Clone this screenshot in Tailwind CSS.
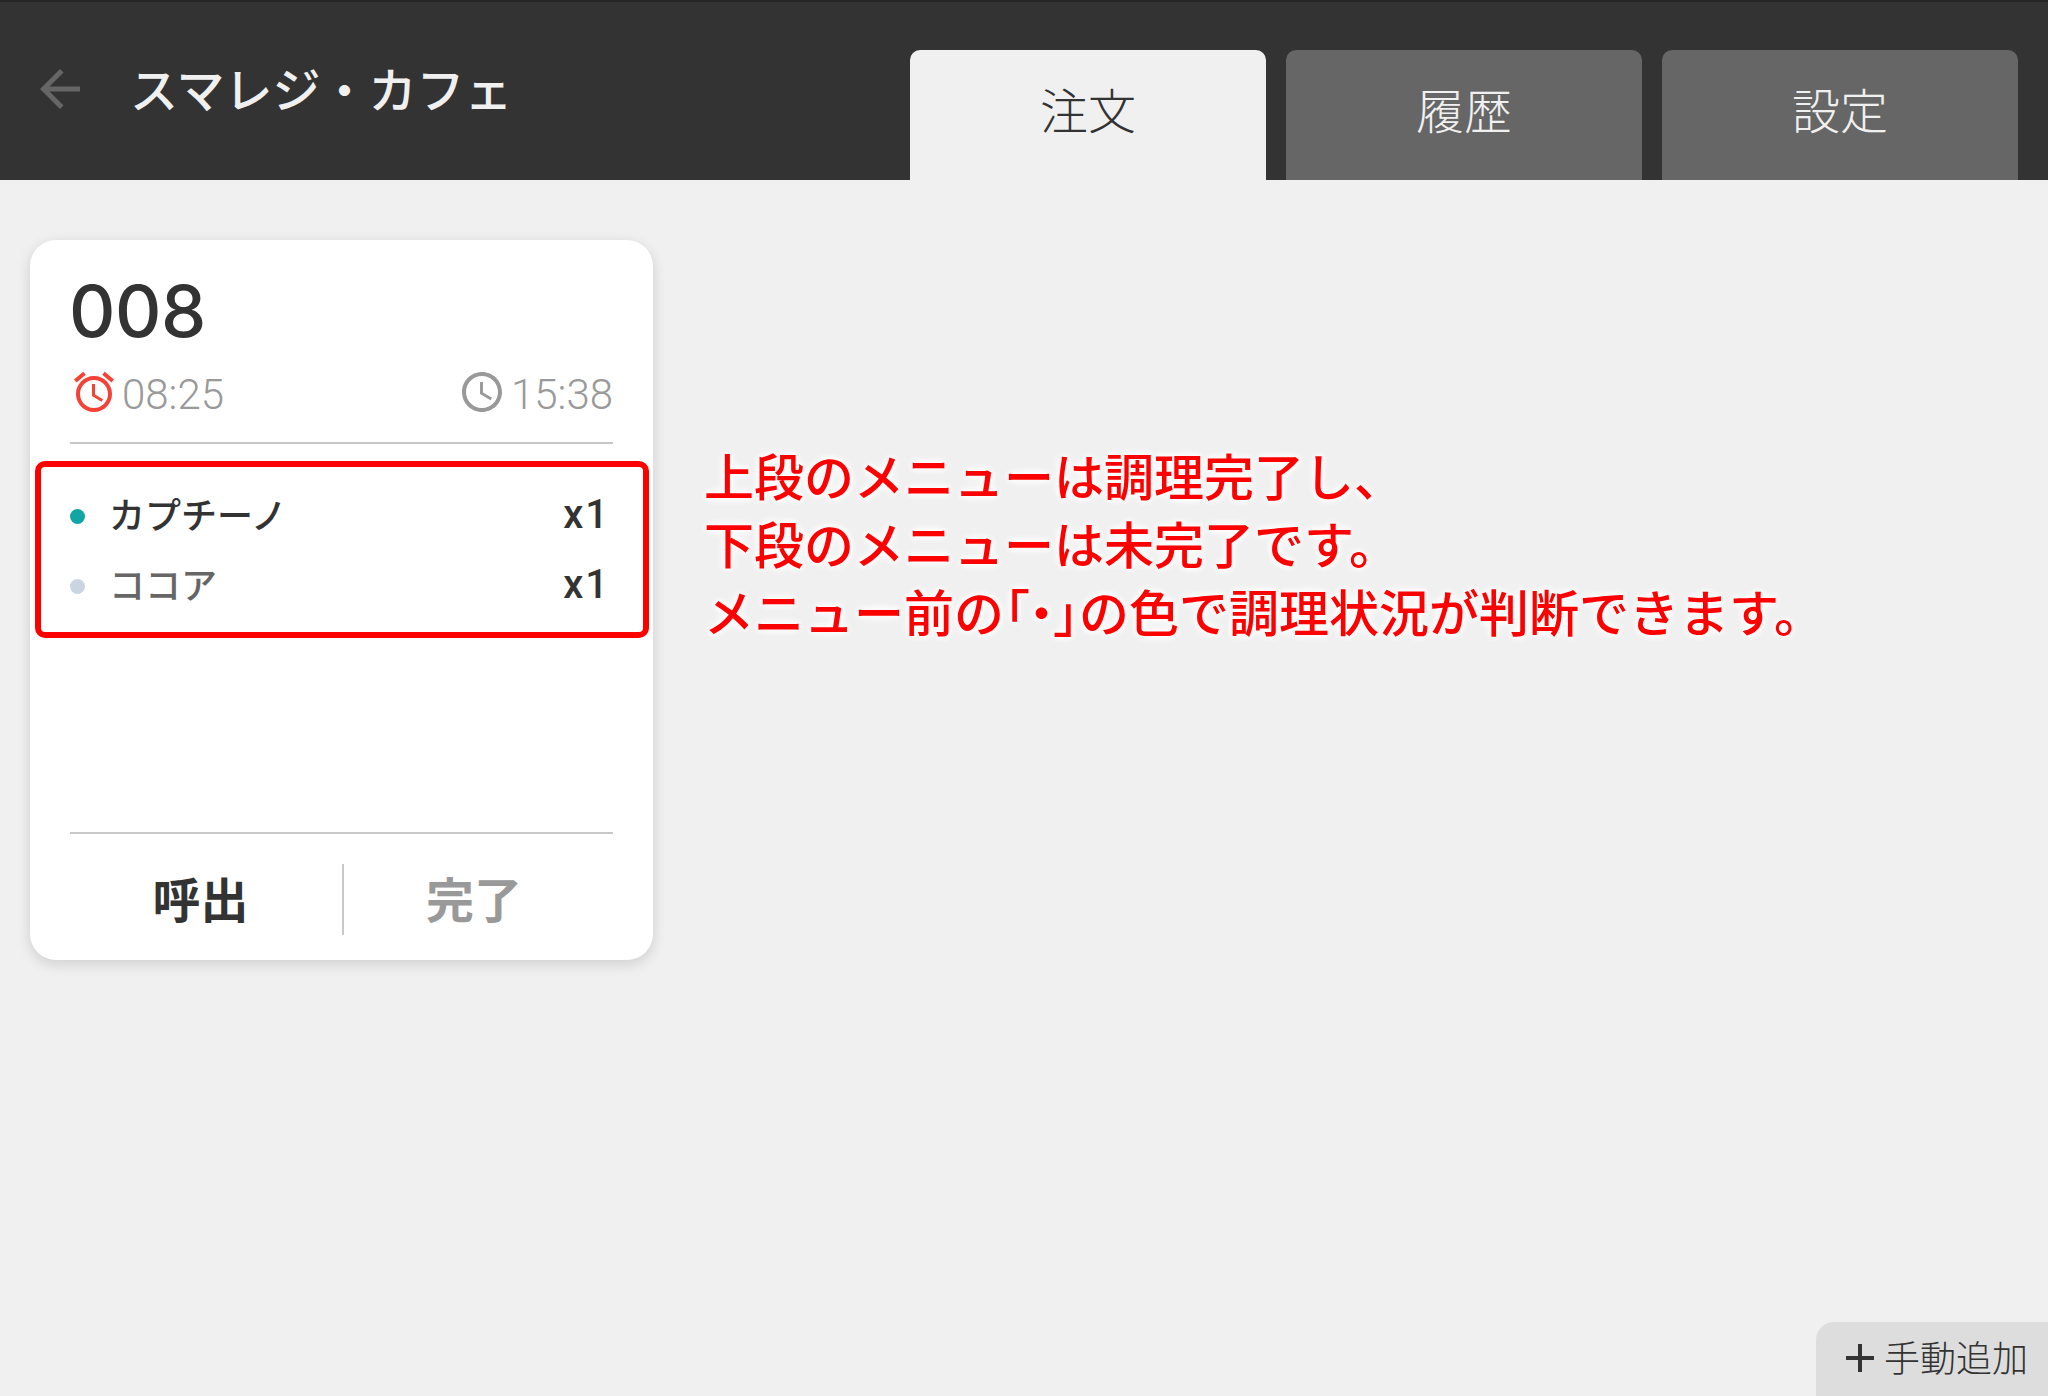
<!DOCTYPE html>
<html lang="ja">
<head>
<meta charset="utf-8">
<title>スマレジ・カフェ</title>
<script src="https://cdn.jsdelivr.net/npm/@tailwindcss/browser@4"></script>
</head>
<body class="bg-[#f0f0f0] font-['Noto_Sans_CJK_JP','Noto_Sans',sans-serif]">
<div class="flex h-[1396px] w-[2048px] flex-col overflow-hidden relative">
  <header class="flex h-[180px] items-stretch justify-between bg-[#333333] border-t-2 border-[#262626] pr-[30px]">
    <div class="flex items-center pl-[30px] pb-[2px]">
      <svg class="h-[60px] w-[60px] fill-[#666666] -mt-[2px]" viewBox="0 0 24 24"><path d="M20 11H7.83l5.59-5.59L12 4l-8 8 8 8 1.41-1.41L7.83 13H20v-2z"/></svg>
      <h1 class="ml-[40px] mb-[7px] text-[48px] leading-none font-medium text-[#f0f0f0]">スマレジ・カフェ</h1>
    </div>
    <nav class="flex items-end gap-[20px]">
      <div class="flex h-[130px] w-[356px] items-start justify-center rounded-t-[10px] bg-[#f0f0f0] pt-[22px] text-[48px] leading-[72px] font-light text-[#333333]">注文</div>
      <div class="flex h-[130px] w-[356px] items-start justify-center rounded-t-[10px] bg-[#666666] pt-[22px] text-[48px] leading-[72px] font-light text-[#f0f0f0]">履歴</div>
      <div class="flex h-[130px] w-[356px] items-start justify-center rounded-t-[10px] bg-[#666666] pt-[22px] text-[48px] leading-[72px] font-light text-[#f0f0f0]">設定</div>
    </nav>
  </header>
  <main class="flex flex-1 items-start pl-[30px] pt-[60px]">
    <section class="relative flex h-[720px] w-[623px] flex-col rounded-[26px] bg-white px-[40px] pt-[30px] pb-[25px] shadow-[0_4px_14px_rgba(0,0,0,0.14)]">
      <div class="-ml-[1px] font-['Inter',sans-serif] text-[72px] leading-[82px] font-[550] tracking-[-0.5px] text-[#333333]">008</div>
      <div class="mt-4 flex h-[48px] items-center justify-between">
        <div class="flex items-center gap-[4px]">
          <svg class="h-[48px] w-[48px] fill-[#f44336]" viewBox="0 0 24 24"><path d="M22 5.72l-4.6-3.86-1.29 1.53 4.6 3.86L22 5.72zM7.88 3.39L6.6 1.86 2 5.71l1.29 1.53 4.59-3.85zM12.5 8H11v6l4.75 2.85.75-1.23-4-2.37V8zM12 4c-4.97 0-9 4.03-9 9s4.03 9 9 9 9-4.03 9-9-4.03-9-9-9zm0 16c-3.87 0-7-3.13-7-7s3.13-7 7-7 7 3.13 7 7-3.13 7-7 7z"/></svg>
          <span class="mt-[6px] font-['Roboto',sans-serif] text-[42px] leading-[48px] font-light text-[#999999]">08:25</span>
        </div>
        <div class="flex items-center gap-[5px]">
          <svg class="h-[48px] w-[48px] fill-[#999999]" viewBox="0 0 24 24"><path d="M11.99 2C6.47 2 2 6.48 2 12s4.47 10 9.99 10C17.52 22 22 17.52 22 12S17.52 2 11.99 2zM12 20c-4.42 0-8-3.58-8-8s3.58-8 8-8 8 3.58 8 8-3.58 8-8 8zm.5-13H11v6l5.25 3.15.75-1.23-4.5-2.67z"/></svg>
          <span class="mt-[6px] font-['Roboto',sans-serif] text-[42px] leading-[48px] font-light text-[#999999]">15:38</span>
        </div>
      </div>
      <div class="mt-[26px] h-[2px] bg-[#c8c8c8]"></div>
      <ul class="flex flex-1 flex-col pt-[37px]">
        <li class="flex h-[70px] items-center">
          <span class="h-[15px] w-[15px] rounded-full bg-[#12a5a5]"></span>
          <span class="ml-[24px] mb-[7px] flex-1 text-[36px] leading-none font-medium text-[#333333]">カプチーノ</span>
          <span class="mr-[3px] mb-[2px] font-['Roboto',sans-serif] text-[40px] leading-none font-medium tracking-[2px] text-[#333333]">x1</span>
        </li>
        <li class="flex h-[70px] items-center">
          <span class="h-[15px] w-[15px] rounded-full bg-[#c9d6e2]"></span>
          <span class="ml-[24px] mb-[7px] flex-1 text-[36px] leading-none font-medium text-[#666666]">ココア</span>
          <span class="mr-[3px] mb-[2px] font-['Roboto',sans-serif] text-[40px] leading-none font-medium tracking-[2px] text-[#333333]">x1</span>
        </li>
      </ul>
      <div class="h-[2px] bg-[#c8c8c8]"></div>
      <div class="mt-[30px] flex h-[71px]">
        <div class="flex w-[274px] items-center justify-center border-r-2 border-[#c8c8c8] pr-[11px] pb-[6px] text-[48px] leading-none font-bold text-[#333333]">呼出</div>
        <div class="flex flex-1 items-center justify-center pr-[9px] pb-[6px] text-[48px] leading-none font-bold text-[#999999]">完了</div>
      </div>
      <div class="absolute left-[5px] top-[221px] h-[177px] w-[614px] rounded-[10px] border-[6px] border-[#ff0000]"></div>
    </section>
    <p class="ml-[51px] mt-[200px] text-[50px] leading-[68px] font-medium whitespace-nowrap text-[#ff0000] [text-shadow:0_0_10px_#ffffff,0_0_10px_#ffffff,0_0_6px_#ffffff]">上段のメニューは調理完了し、<br>下段のメニューは未完了です。<br>メニュー前の<span class="[font-feature-settings:'palt']">「・」</span>の色で調理状況が判断できます。</p>
  </main>
  <button class="absolute right-0 bottom-0 flex h-[74px] w-[232px] items-start rounded-tl-[18px] bg-[#dddddd] pt-[12px] pl-[29px] text-[36px] leading-[44px] font-light text-[#333333]">
    <svg class="mr-[9px] mt-[9px] h-[30px] w-[30px] fill-[#333333]" viewBox="0 0 30 30"><path d="M13 1h4v12h12v4H17v12h-4V17H1v-4h12z"/></svg>
    <span>手動追加</span>
  </button>
</div>
</body>
</html>
